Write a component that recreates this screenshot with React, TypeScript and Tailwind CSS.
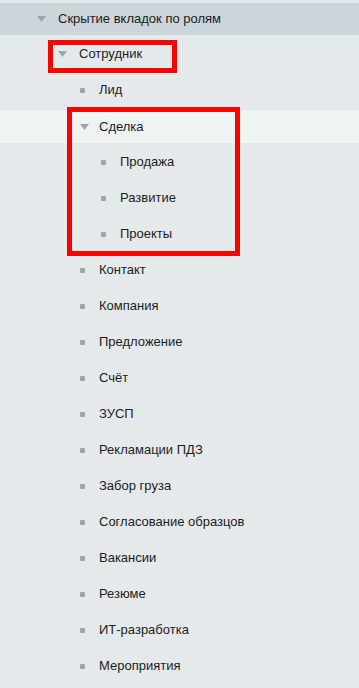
import React from "react";

const Arrow = () => (
  <svg width="9" height="6" viewBox="0 0 9 6" className="shrink-0">
    <path d="M0 0H9L4.5 6Z" fill="#9ea4aa" />
  </svg>
);

const Bullet = () => <span className="w-[5px] h-[5px] rounded-[1px] bg-[#9ea4aa] shrink-0" />;

const Item = ({ label, indent }: { label: string; indent: string }) => (
  <div className={`h-9 flex items-center ${indent}`}>
    <Bullet />
    <span className="ml-[14px]">{label}</span>
  </div>
);

const dealChildren = ["Продажа", "Развитие", "Проекты"];

const rest = [
  "Контакт",
  "Компания",
  "Предложение",
  "Счёт",
  "ЗУСП",
  "Рекламации ПДЗ",
  "Забор груза",
  "Согласование образцов",
  "Вакансии",
  "Резюме",
  "ИТ-разработка",
  "Мероприятия",
];

export default function App() {
  return (
    <div
      className="w-[359px] h-[688px] overflow-hidden bg-[#e4eaeb] text-[13px] text-[#1c1c1c]"
      style={{ fontFamily: '"Liberation Sans", Arial, sans-serif' }}
    >
      <div className="h-9 pt-[3px]">
        <div className="h-8 bg-[#ccd5d9] flex items-center pl-[37px]">
          <Arrow />
          <span className="ml-[12px]">Скрытие вкладок по ролям</span>
        </div>
      </div>

      <div className="relative h-9 flex items-center pl-[58px]">
        <Arrow />
        <span className="ml-[12px]">Сотрудник</span>
        <div className="absolute left-[48px] top-[4px] w-[129px] h-[33px] border-[5px] border-[#ff0000]" />
      </div>

      <Item label="Лид" indent="pl-[80px]" />

      <div className="relative">
        <div className="h-9 pt-[2px]">
          <div className="h-[33px] bg-[#eff3f4] flex items-center pl-[80px]">
            <Arrow />
            <span className="ml-[10px]">Сделка</span>
          </div>
        </div>
        {dealChildren.map((c) => (
          <Item key={c} label={c} indent="pl-[101px]" />
        ))}
        <div className="absolute left-[67px] top-[-1px] w-[173px] h-[149px] border-[5px] border-[#ff0000]" />
      </div>

      {rest.map((r) => (
        <Item key={r} label={r} indent="pl-[80px]" />
      ))}
    </div>
  );
}
